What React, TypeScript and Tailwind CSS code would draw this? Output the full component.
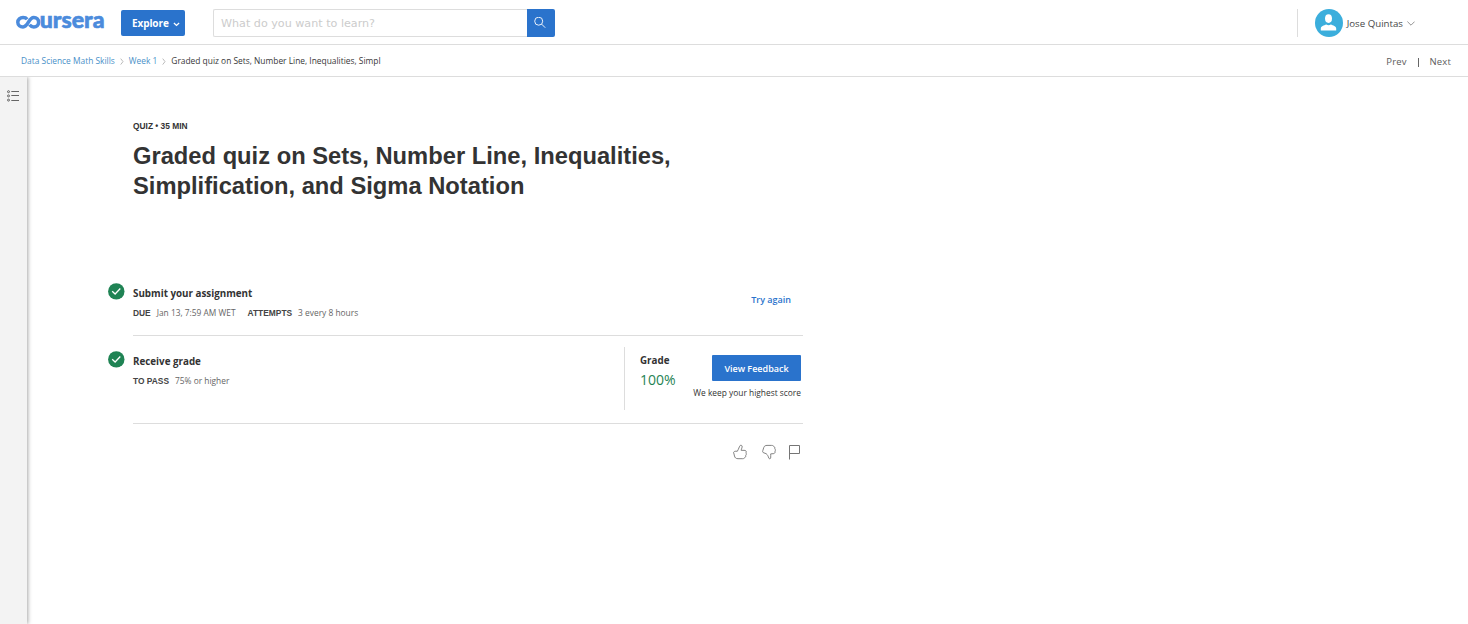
import React from "react";

function Logo() {
  return (
    <svg className="h-[20px] w-[92px] overflow-visible" viewBox="0 0 92 20" role="img" aria-label="coursera">
      <path
        d="M12.2 7.2C11.2 5.9 9.8 5.5 8 5.5C5.1 5.5 2.8 7.5 2.8 10.3C2.8 13.1 5.1 14.9 8 14.9C13.6 14.9 13.2 5.5 18.8 5.5C21.6 5.5 23.6 7.5 23.6 10.3C23.6 13.1 21.6 14.9 18.8 14.9C16.8 14.9 15.4 14 14.5 12.8"
        fill="none"
        stroke="#4b8bdc"
        strokeWidth="3.5"
      />
      <text
        x="24.8"
        y="16.4"
        textLength="64.7"
        lengthAdjust="spacingAndGlyphs"
        fill="#4b8bdc"
        stroke="#4b8bdc"
        strokeWidth="0.6"
        className="font-['Lato'] text-[22px] font-black"
      >
        ursera
      </text>
    </svg>
  );
}

function Chevron() {
  return (
    <svg className="mx-[5px] mt-[1px] h-[7px] w-[4px]" viewBox="0 0 4 7" fill="none" stroke="#bbb">
      <path d="M.7.6 3 3.6 .7 6.6" />
    </svg>
  );
}

function Check() {
  return (
    <svg className="h-[17px] w-[17px] shrink-0" viewBox="0 0 17 17">
      <circle cx="8.3" cy="8.4" r="8.2" fill="#1f8354" />
      <path d="M4.2 8.2 7.1 11 12.3 5.5" fill="none" stroke="#fff" strokeWidth="1.3" />
    </svg>
  );
}

function Header() {
  return (
    <header className="flex h-[45px] items-start border-b border-[#ddd] pl-[15px]">
      <div className="mt-[12px]">
        <Logo />
      </div>
      <button className="mt-[10px] ml-[14px] flex h-[26px] w-[64px] items-center rounded-[2px] bg-[#2a73cc] pl-[11px] text-[10px] font-bold text-white">
        <span className="tracking-[-0.1px]">Explore</span>
        <svg className="mt-[2px] ml-[4px] h-[5px] w-[7px]" viewBox="0 0 7 5" fill="none" stroke="#fff" strokeWidth="1.3">
          <path d="M.9 1 3.5 3.4 6.1 1" />
        </svg>
      </button>
      <div className="mt-[9px] ml-[28px] flex h-[28px]">
        <div className="flex w-[314px] items-center rounded-l-[2px] border border-r-0 border-[#ddd] pt-[2px] pl-[7px] font-['DejaVu_Sans'] text-[11.15px] text-[#ccc]">
          What do you want to learn?
        </div>
        <button className="w-[28px] rounded-r-[2px] bg-[#2a73cc] pl-[7px]">
          <svg className="h-[12px] w-[12px]" viewBox="0 0 12 12" fill="none" stroke="#fff" strokeWidth=".9">
            <circle cx="4.7" cy="4.2" r="4" />
            <path d="m7.6 7.1 3.6 3.6" />
          </svg>
        </button>
      </div>
      <div className="mt-[9px] mr-[53px] ml-auto flex h-[28px] items-center border-l border-[#ddd] pl-[17px]">
        <svg className="h-[28px] w-[28px]" viewBox="0 0 28 28">
          <circle cx="14" cy="14" r="14" fill="#3baedc" />
          <ellipse cx="13.5" cy="9.6" rx="3.5" ry="4.3" fill="#fff" />
          <path d="M5.8 21.5V19.6C5.8 17.2 9 16.6 11.3 15.6C12.6 16.6 14.5 16.6 15.8 15.6C18 16.6 21.2 17.2 21.2 19.6V21.5Z" fill="#fff" />
        </svg>
        <span className="mt-[2px] ml-[4px] text-[9.7px] text-[#484848]">Jose Quintas</span>
        <svg className="ml-[4px] h-[5px] w-[8px]" viewBox="0 0 8 5" fill="none" stroke="#888" strokeWidth=".9">
          <path d="M.4.6 4 4.2 7.6.6" />
        </svg>
      </div>
    </header>
  );
}

function Breadcrumbs() {
  return (
    <nav className="flex h-[32px] items-center border-b border-[#ddd] pt-[2px] pr-[17px] pl-[21px]">
      <div className="flex items-center text-[8.4px] text-[#4a90c8]">
        <a>Data Science Math Skills</a>
        <Chevron />
        <a>Week 1</a>
        <Chevron />
        <span className="text-[#373737]">Graded quiz on Sets, Number Line, Inequalities, Simpl</span>
      </div>
      <div className="ml-auto flex items-center pt-[1px] text-[9.5px] text-[#5c5c5c]">
        <span className="tracking-[0.15px]">Prev</span>
        <span className="mr-[11px] ml-[11px] h-[9px] w-px bg-[#666]" />
        <span className="tracking-[0.15px]">Next</span>
      </div>
    </nav>
  );
}

function Reactions() {
  return (
    <div className="mt-[20px] flex items-center pl-[600px] text-[#757575]">
      <svg className="h-[16px] w-[14px]" viewBox="0 0 14 16" fill="none" stroke="currentColor" strokeWidth=".9">
        <path d="M1.5 12 .6 8.5C.7 7.6 1.8 7.2 3 7.2L4.3 7.3C4.8 5.9 5.9 4.8 6.4 2.8C6.8 1 8.6.8 9.1 2C9.4 3.4 8.4 4.8 8.1 6.3L12 6.4C13.4 6.8 13.6 8 12.9 8.9C13.6 9.7 13.4 10.7 12.7 11.2C13 12.3 12.6 13 11.9 13.3C11.7 14.3 10.7 14.7 9.7 14.7H5C3 14.7 1.8 13.7 1.5 12Z" />
      </svg>
      <svg className="ml-[15px] h-[16px] w-[14px]" viewBox="0 0 14 16" fill="none" stroke="currentColor" strokeWidth=".9">
        <path d="M1.8 3.4C2.3 2 3.4 1.4 5 1.4H9.7C10.7 1.4 11.7 1.7 11.9 2.7C12.8 3 13 3.8 12.8 4.8C13.5 5.4 13.6 6.5 13 7.2C13.4 8.4 12.8 9.3 11.8 9.6L8.7 9.9C8.3 10.8 9.2 12.5 8.7 14C8.3 15.1 7.2 15 6.8 14.1C6.2 12.3 5.6 10.8 4.2 9.7L2 8.9C.6 8.6.4 7.6.8 6.6Z" />
      </svg>
      <svg className="ml-[13px] h-[16px] w-[11px]" viewBox="0 0 11 16" fill="none" stroke="currentColor">
        <path d="M.5 15.5V1.5H10.5V9.5H.5" />
      </svg>
    </div>
  );
}

export default function App() {
  return (
    <div className="flex h-[624px] flex-col overflow-hidden bg-white font-['Open_Sans',sans-serif] text-[#333]">
      <Header />
      <Breadcrumbs />
      <div className="flex flex-1 overflow-hidden">
        <aside className="w-[27px] shrink-0 bg-[#f3f3f3] pt-[13px] pl-[7px] shadow-[1px_0_4px_rgba(0,0,0,.35)]">
          <svg className="h-[12px] w-[12px]" viewBox="0 0 12 12" fill="none" stroke="#555" strokeWidth=".9">
            <circle cx="1.5" cy="1.7" r="1" />
            <circle cx="1.5" cy="5.9" r="1" />
            <circle cx="1.5" cy="10.1" r="1" />
            <path d="M4.3 1.5H12M4.3 5.5H12M4.3 10.5H12" />
          </svg>
        </aside>
        <main className="ml-[106px] w-[670px] pt-[43px]">
          <div className="h-[12px] font-['Liberation_Sans'] text-[8.4px] leading-[12px] font-bold">QUIZ • 35 MIN</div>
          <h1 className="mt-[9px] font-['Liberation_Sans'] text-[23.72px] leading-[30px] font-bold">
            Graded quiz on Sets, Number Line, Inequalities,
            <br />
            Simplification, and Sigma Notation
          </h1>
          <section className="mt-[81px] flex h-[54px] border-b border-[#ddd]">
            <div className="mt-[1px] mr-[8px] -ml-[25px]">
              <Check />
            </div>
            <div>
              <h2 className="mt-[5px] text-[9.8px] leading-[14px] font-bold">Submit your assignment</h2>
              <p className="mt-[6px] flex text-[8.4px] leading-[12px] text-[#666]">
                <b className="mr-[6px] font-['Liberation_Sans'] text-[#444]">DUE</b>Jan 13, 7:59 AM WET
                <b className="mr-[6px] ml-[12px] font-['Liberation_Sans'] text-[#444]">ATTEMPTS</b>3 every 8 hours
              </p>
            </div>
            <a className="mt-[11px] mr-[12px] ml-auto text-[9px] leading-[14px] font-semibold text-[#2a73cc]">Try again</a>
          </section>
          <section className="flex h-[88px] border-b border-[#ddd]">
            <div className="mt-[15px] mr-[8px] -ml-[25px]">
              <Check />
            </div>
            <div>
              <h2 className="mt-[19px] text-[9.8px] leading-[14px] font-bold">Receive grade</h2>
              <p className="mt-[6px] flex text-[8.4px] leading-[12px] text-[#666]">
                <b className="mr-[6px] font-['Liberation_Sans'] text-[#444]">TO PASS</b>75% or higher
              </p>
            </div>
            <div className="mt-[11px] mr-[2px] ml-auto flex h-[63px] w-[177px] border-l border-[#ddd] pl-[15px]">
              <div>
                <h3 className="mt-[7px] text-[9.8px] leading-[14px] font-bold">Grade</h3>
                <div className="mt-[3px] text-[14px] leading-[18px] text-[#1f8354]">100%</div>
              </div>
              <div className="ml-auto flex flex-col items-end">
                <button className="mt-[8px] h-[26px] w-[89px] rounded-[1px] bg-[#2a73cc] pt-[2px] text-[9px] font-semibold text-white">View Feedback</button>
                <span className="mt-[6px] text-[8.4px] leading-[12px] whitespace-nowrap">We keep your highest score</span>
              </div>
            </div>
          </section>
          <Reactions />
        </main>
      </div>
    </div>
  );
}
